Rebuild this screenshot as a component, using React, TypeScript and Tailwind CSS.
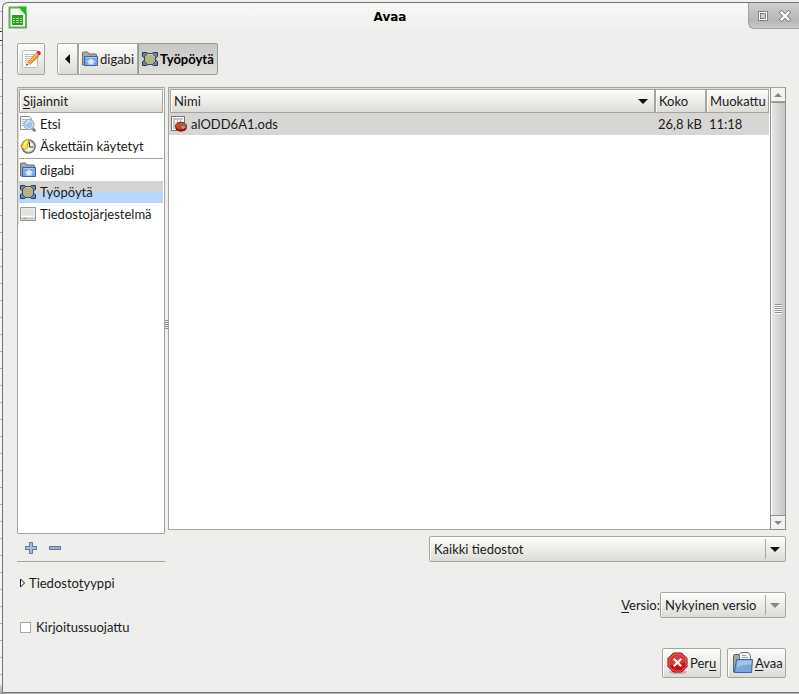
import { ReactNode } from 'react'

const bevel = 'border border-[#a5a59d] bg-linear-to-b from-[#fdfdfd] to-[#dcdcd7] shadow-[inset_1px_1px_0_#fff]'

function SpreadsheetIcon() {
  return (
    <svg width="20" height="24" viewBox="0 0 20 24">
      <path d="M1.500 1.500h10l6.500 7v13h-16.500z" fill="#f6fbf5" stroke="#5fae50" strokeWidth="2" />
      <path d="M10 .5h8.500v8.500z" fill="#1fb81a" />
      <path d="M10.500 2.500l6 6.500" stroke="#d8f3d5" strokeWidth="1.500" />
      <rect x="4" y="9" width="11" height="10" fill="#2f9a24" />
      <path d="M5 12.500h9M5 14.500h9M5 16.500h9" stroke="#a6dd9f" />
      <path d="M7.500 11v7M11.500 11v7" stroke="#2f9a24" />
    </svg>
  )
}

function PencilIcon() {
  return (
    <svg width="20" height="20" viewBox="0 0 20 20">
      <rect x="1.500" y="1.500" width="15" height="17" rx="1" fill="#fafaf9" stroke="#bdbdb9" />
      <path d="M4 5.500h9M4 7.500h8M4 9.500h5M4 11.500h4M4 13.500h2" stroke="#c0c0be" />
      <path d="M6.500 13.500l8.500-9 2.800 2.600-8.800 8.400z" fill="#f5a234" stroke="#b06a1e" strokeWidth=".8" />
      <path d="M8 13l8-8" stroke="#ffd08a" />
      <path d="M14.500 4.500l1.500-1.800 3 2.800-1.500 1.600z" fill="#b9bbb8" />
      <path d="M15.800 3q1.500-1.500 2.900-.2t-.1 2.900l-.5.500z" fill="#d92a2a" stroke="#d92a2a" />
      <path d="M5.500 16.200l1-3.200 2.600 2.400z" fill="#f2dfbd" />
      <path d="M5 16.700l2.200-.7-1.500-1.500z" fill="#222" />
    </svg>
  )
}

function HomeFolderIcon() {
  return (
    <svg width="16" height="16" viewBox="0 0 16 16" className="shrink-0">
      <path d="M.5 14V2q0-1 1-1h4l1.500 2h6.500q1 0 1 1v10z" fill="#a9aaa8" stroke="#6b6d6a" />
      <path d="M2.500 5.500h13v9h-13z" fill="#7ca8de" stroke="#3567a8" />
      <path d="M3.500 6.500h11" stroke="#b2cdf0" />
      <path d="M9 7.500l4.500 3.500h-2v2.500h-5V11h-2z" fill="#dce9f8" />
    </svg>
  )
}

function DesktopIcon() {
  return (
    <svg width="16" height="16" viewBox="0 0 16 16" className="shrink-0">
      <path
        d="M.5 1.500h4l1.500 1-4.500 4-1-1zM15.500 1.500h-4l-1.500 1 4.500 4 1-1zM.5 14.500h4l1.500-1-4.500-4-1 1zM15.500 14.500h-4l-1.500-1 4.500-4 1 1z"
        fill="#6787b3"
        stroke="#27384e"
      />
      <path d="M5.500 2.500h5l3 3v5l-3 3h-5l-3-3v-5z" fill="#b3b28e" stroke="#45483a" />
      <path d="M5.500 3.500h5l2 2.500" fill="none" stroke="#d0cfb0" />
    </svg>
  )
}

function SearchIcon() {
  return (
    <svg width="16" height="16" viewBox="0 0 16 16" className="shrink-0">
      <path d="M.5.500h9l2 2v11H.5z" fill="#f4f4f3" stroke="#8c8e8a" />
      <path d="M2 3.500h5M2 5.500h3M2 7.500h2M2 9.500h2" stroke="#b8b8b5" />
      <path d="M12.500 12.500l2 2" stroke="#7b7d7a" strokeWidth="2.500" strokeLinecap="round" />
      <circle cx="9" cy="8.500" r="4.500" fill="#a0c4ef" stroke="#e4e6e8" strokeWidth="2" />
      <circle cx="9" cy="8.500" r="5" fill="none" stroke="#7288a5" strokeWidth=".8" />
      <path d="M6.500 8q.5-2.500 3-2.500" fill="none" stroke="#e4f0ff" />
    </svg>
  )
}

function RecentIcon() {
  return (
    <svg width="16" height="16" viewBox="0 0 16 16" className="shrink-0">
      <circle cx="8.500" cy="8.500" r="6.500" fill="#f0f0ee" stroke="#6d6f69" strokeWidth="1.600" />
      <circle cx="8.500" cy="8.500" r="5.300" fill="none" stroke="#c8c8c3" />
      <path d="M9.500 4v5H13" fill="none" stroke="#333" />
      <path d="M8.500 1.500v4.500l-1 0v3.500L4.500 12 .5 7.500h2q0-5 6-6z" fill="#f7e25c" stroke="#c4a012" />
      <path d="M7 3.500q-3 1-3 4.500" fill="none" stroke="#fdf6b8" />
    </svg>
  )
}

function DriveIcon() {
  return (
    <svg width="16" height="16" viewBox="0 0 16 16" className="shrink-0">
      <path d="M.5 1.500h15v13H.5z" fill="#ededec" stroke="#989a95" />
      <path d="M2 3.500h12v6H2z" fill="#e2e2e0" />
      <path d="M1 10.500h14v3.500H1z" fill="#d6d7d4" />
      <path d="M1 10.500h14" stroke="#fff" />
      <path d="M3 12.500h4M9.500 12.500h1M11.500 12.500h1" stroke="#9b9d98" />
    </svg>
  )
}

function OdsIcon() {
  return (
    <svg width="16" height="16" viewBox="0 0 16 16" className="shrink-0">
      <rect x=".5" y=".5" width="13" height="14" fill="#fff" stroke="#767674" />
      <path d="M2 2h10v2H2zM2 4h2v9H2z" fill="#c6c6c4" />
      <path d="M2 6.500h10M2 9.500h10M6.500 2v11M9.500 2v11" stroke="#c0c0be" />
      <ellipse cx="10" cy="12" rx="5.700" ry="3.700" fill="#7e1712" />
      <ellipse cx="10" cy="10" rx="5.500" ry="3.800" fill="#cf4433" stroke="#8d1f17" />
      <path d="M10 10l3-3q2.500 1 2 3.500z" fill="#4c79ae" />
      <path d="M10 10l4.800 1-2.800 2z" fill="#e0a43a" />
    </svg>
  )
}

function StopIcon() {
  return (
    <svg width="22" height="22" viewBox="0 0 22 22">
      <ellipse cx="11" cy="20" rx="9" ry="2" fill="#0003" />
      <path d="M6.500 1h8l5.500 5.500v8L14.500 20h-8L1 14.500v-8z" fill="#cc1010" stroke="#980000" />
      <path d="M7 2h7l5 5v3.500L2 13.500V7z" fill="#e46060" opacity=".5" />
      <path d="M7 2h7l5 5v7l-5 5H7l-5-5V7z" fill="none" stroke="#e66a6a" />
      <path d="M7.500 7.500l6 6M13.500 7.500l-6 6" stroke="#fff" strokeWidth="2.200" strokeLinecap="square" />
    </svg>
  )
}

function OpenFolderIcon() {
  return (
    <svg width="22" height="22" viewBox="0 0 22 22">
      <path d="M1.500 20V3.500q0-1 1-1H7l1 2h10V20z" fill="#a5a6a4" stroke="#5f615e" />
      <path d="M7.500 10V2.500l1.500-2h7.500l2 3.500v6z" fill="#f6f6f5" stroke="#737572" />
      <path d="M10 3.500h4M10 5.500h6" stroke="#a3a3a1" />
      <path d="M4.500 7.500h16l-1 13h-17z" fill="#78a7dc" stroke="#3465a4" />
      <path d="M5.500 8.500h14l-.3 4q-8 0-14.500 3z" fill="#a0c2ea" />
    </svg>
  )
}

function Arrow({ className, size = 10 }: { className: string; size?: number }) {
  return (
    <svg width={size} height={size / 2} viewBox="0 0 10 5" className={className}>
      <path d="M0 0h10L5 5z" fill="currentColor" />
    </svg>
  )
}

function Place({ icon, label, className = '' }: { icon: ReactNode; label: string; className?: string }) {
  return (
    <button className={'flex h-[22px] w-full items-center gap-1 px-px text-left ' + className}>
      {icon}
      {label}
    </button>
  )
}

function Combo({ id, value, className, arrow, label }: { id: string; value: string; className: string; arrow: string; label?: string }) {
  return (
    <div className={'relative h-[26px] ' + className}>
      <select id={id} aria-label={label} className={'h-full w-full appearance-none rounded-[2px] pr-6 pl-1 outline-none ' + bevel}>
        <option>{value}</option>
      </select>
      <div className="pointer-events-none absolute inset-y-[3px] right-[6px] flex items-center border-l border-[#a5a59d] pl-1">
        <Arrow className={arrow} />
      </div>
    </div>
  )
}

const columns = [
  { name: 'Nimi', width: '', sorted: true },
  { name: 'Koko', width: 'w-[51px]' },
  { name: 'Muokattu', width: 'w-[63px]' },
]

const files = [{ name: 'alODD6A1.ods', size: '26,8 kB', modified: '11:18' }]

export default function App() {
  return (
    <div className="flex h-screen min-h-[480px] bg-linear-to-b from-[#f0f0f0] from-98% to-[#a8a8a8] pt-[2px] pb-px font-['Lato',sans-serif] text-[13px] leading-5 text-[#1a1a1a]">
      <div className="mb-2 w-[2px] bg-[#f4f4f4] bg-[repeating-linear-gradient(to_bottom,transparent_0_9px,#b0b0b0_9px_10px,transparent_10px_17px)] pt-[29px]">
        <div className="h-[10px] border-y border-[#333]" />
      </div>
      <main className="flex min-w-0 flex-1 flex-col rounded-tl-[6px] border-y border-l border-[#737373] bg-[#eeeeec] bg-linear-to-b from-[#f8f8f7] to-[#eeeeec] to-[30px]">
        <header className="flex h-[27px] items-start">
          <div className="flex w-[51px] pt-[3px] pl-[5px]">
            <SpreadsheetIcon />
          </div>
          <h1 className="flex-1 pt-1 pr-[22px] text-center font-['DejaVu_Sans',sans-serif] text-[12px] font-bold text-black">Avaa</h1>
          <div className="flex h-[26px] w-[51px] items-center justify-between rounded-bl-[6px] border-b border-l border-[#a0a09e] bg-linear-to-b from-[#d0d0cf] via-[#b6b6b5] via-70% to-[#cacac9] pr-2 pl-[9px]">
            <button aria-label="Suurenna">
              <svg width="10" height="10" viewBox="0 0 10 10">
                <rect x=".5" y=".5" width="9" height="9" fill="#fff" stroke="#858585" />
                <rect x="2.500" y="2.500" width="5" height="5" fill="#ccc" stroke="#858585" />
              </svg>
            </button>
            <button aria-label="Sulje">
              <svg width="12" height="12" viewBox="0 0 12 12">
                <path d="M2.500 2.500l7 7M9.500 2.500l-7 7" stroke="#858585" strokeWidth="4" strokeLinecap="square" />
                <path d="M2.500 2.500l7 7M9.500 2.500l-7 7" stroke="#fff" strokeWidth="2.200" strokeLinecap="square" />
              </svg>
            </button>
          </div>
        </header>

        <div className="mt-[13px] flex h-8 pl-[14px]">
          <button aria-label="Kirjoita tiedostonimi" className={'mr-3 flex w-7 items-center justify-center rounded-[2px] ' + bevel}>
            <PencilIcon />
          </button>
          <button aria-label="Edellinen" className={'flex w-[21px] items-center justify-center rounded-l-[2px] ' + bevel}>
            <svg width="5" height="10" viewBox="0 0 5 10">
              <path d="M5 0v10L0 5z" fill="#111" />
            </svg>
          </button>
          <button className={'flex items-center gap-[2px] px-[3px] ' + bevel}>
            <HomeFolderIcon />
            digabi
          </button>
          <button className="flex items-center gap-[2px] rounded-r-[2px] border border-[#999991] bg-linear-to-b from-[#c6c6c4] to-[#dededc] px-[3px] font-bold text-black">
            <DesktopIcon />
            Työpöytä
          </button>
        </div>

        <div className="mt-3 flex min-h-0 flex-1 pr-[13px] pl-[14px]">
          <div className="flex w-[148px] flex-col">
            <nav className="flex-1 rounded-[1px] border border-[#a5a59d] bg-white">
              <div className="border-t border-l border-[#dcdcd8] pr-px">
                <button className={'block h-6 w-full px-[3px] text-left ' + bevel}>
                  <u className="underline-offset-2">S</u>ijainnit
                </button>
                <Place icon={<SearchIcon />} label="Etsi" />
                <Place icon={<RecentIcon />} label="Äskettäin käytetyt" />
                <hr className="mt-px border-[#a5a59d]" />
                <Place icon={<HomeFolderIcon />} label="digabi" />
                <Place icon={<DesktopIcon />} label="Työpöytä" className="bg-linear-to-b from-[#d6d4d2] from-50% to-[#b8d6fd] to-50%" />
                <Place icon={<DriveIcon />} label="Tiedostojärjestelmä" />
              </div>
            </nav>
            <div className="flex h-7 items-center gap-3 border-b border-[#a5a59d] pl-2">
              <button aria-label="Lisää">
                <svg width="12" height="12" viewBox="0 0 12 12">
                  <path d="M4.500.5h3v4h4v3h-4v4h-3v-4h-4v-3h4z" fill="#a9bcd4" stroke="#8fa5c2" />
                  <path d="M4.500.5h3v4h4v3h-4v4h-3v-4h-4v-3h4z" fill="none" stroke="#2f4f7c" strokeDasharray="1 1" />
                </svg>
              </button>
              <button aria-label="Poista">
                <svg width="12" height="4" viewBox="0 0 12 4">
                  <path d="M.5.5h11v3H.5z" fill="#9db1cc" stroke="#8fa5c2" />
                  <path d="M.5.5h11v3H.5z" fill="none" stroke="#2f4f7c" strokeDasharray="1 1" />
                </svg>
              </button>
            </div>
          </div>

          <div className="flex w-[3px] flex-col items-center justify-center gap-px">
            {[0, 1, 2, 3, 4].map((n) => (
              <i key={n} className="h-px w-[3px] bg-[#8f8f8b]" />
            ))}
          </div>

          <div className="flex min-w-0 flex-1 flex-col">
            <div className="flex min-h-0 flex-1">
              <div className="min-w-0 flex-1 border border-r-0 border-[#a5a59d] bg-white">
                <div className="border-t border-l border-[#dcdcd8] pr-px">
                  <table className="w-full table-fixed border-collapse">
                    <thead>
                      <tr>
                        {columns.map((c) => (
                          <th key={c.name} className={'p-0 font-normal ' + c.width}>
                            <button className={'flex h-6 w-full items-center justify-between pr-[6px] pl-[3px] ' + bevel}>
                              {c.name}
                              {c.sorted && <Arrow className="text-[#111]" />}
                            </button>
                          </th>
                        ))}
                      </tr>
                    </thead>
                    <tbody>
                      {files.map((f) => (
                        <tr key={f.name} className="h-[22px] bg-[#d8d6d5]">
                          <td className="p-0">
                            <div className="flex items-center gap-1 pl-px">
                              <OdsIcon />
                              {f.name}
                            </div>
                          </td>
                          <td className="p-0 pl-[3px] whitespace-nowrap">{f.size}</td>
                          <td className="p-0 pl-[3px]">{f.modified}</td>
                        </tr>
                      ))}
                    </tbody>
                  </table>
                </div>
              </div>
              <div className="flex w-4 flex-col border-r border-l border-[#8f8f8b]">
                <button aria-label="Vieritä ylös" className="flex h-[15px] items-center justify-center border-y border-[#a5a59d] bg-[#f2f2f0]">
                  <Arrow className="rotate-180 text-[#888884]" size={8} />
                </button>
                <div className="flex flex-1 flex-col items-center justify-center border-t border-l border-t-[#8f8f8b] border-l-white bg-linear-to-r from-[#e6e6e5] to-[#c6c4c4]">
                  {[0, 1, 2, 3, 4].map((n) => (
                    <i key={n} className="h-[2px] w-[7px] border-t border-[#8f8f8b] bg-white" />
                  ))}
                </div>
                <button aria-label="Vieritä alas" className="flex h-[15px] items-center justify-center border-y border-[#8f8f8b] bg-[#f2f2f0]">
                  <Arrow className="text-[#888884]" size={8} />
                </button>
              </div>
            </div>
            <Combo id="filter" label="Suodatin" value="Kaikki tiedostot" className="mt-[6px] ml-auto w-[357px] max-w-full" arrow="text-[#111]" />
          </div>
        </div>

        <footer className="flex justify-between pr-[13px] pb-[14px] pl-[14px]">
          <div className="pt-[11px]">
            <button className="flex items-center gap-1 pl-[3px]">
              <svg width="5" height="10" viewBox="0 0 5 10">
                <path d="M.5 1v8L4.500 5z" fill="#fff" stroke="#111" />
              </svg>
              <span>
                Tiedosto<u className="underline-offset-2">t</u>yyppi
              </span>
            </button>
            <label className="mt-6 flex items-center gap-[5px] pl-[3px]">
              <input type="checkbox" className="size-[11px] appearance-none border border-[#a5a59d] bg-white checked:bg-[#4b6a94]" />
              Kirjoitussuojattu
            </label>
          </div>
          <div className="flex flex-col items-end pt-[30px]">
            <div className="flex items-center">
              <label htmlFor="version">
                <u className="underline-offset-2">V</u>ersio:
              </label>
              <Combo id="version" value="Nykyinen versio" className="w-[126px]" arrow="text-[#888884]" />
            </div>
            <div className="mt-[30px] flex gap-[6px]">
              <button className={'flex h-[30px] w-[59px] items-center gap-px rounded-[2px] pl-1 ' + bevel}>
                <StopIcon />
                <span>
                  Per<u className="underline-offset-2">u</u>
                </span>
              </button>
              <button className={'flex h-[30px] w-[59px] items-center gap-px rounded-[2px] pl-1 ' + bevel}>
                <OpenFolderIcon />
                <span>
                  <u className="underline-offset-2">A</u>vaa
                </span>
              </button>
            </div>
          </div>
        </footer>
      </main>
    </div>
  )
}
